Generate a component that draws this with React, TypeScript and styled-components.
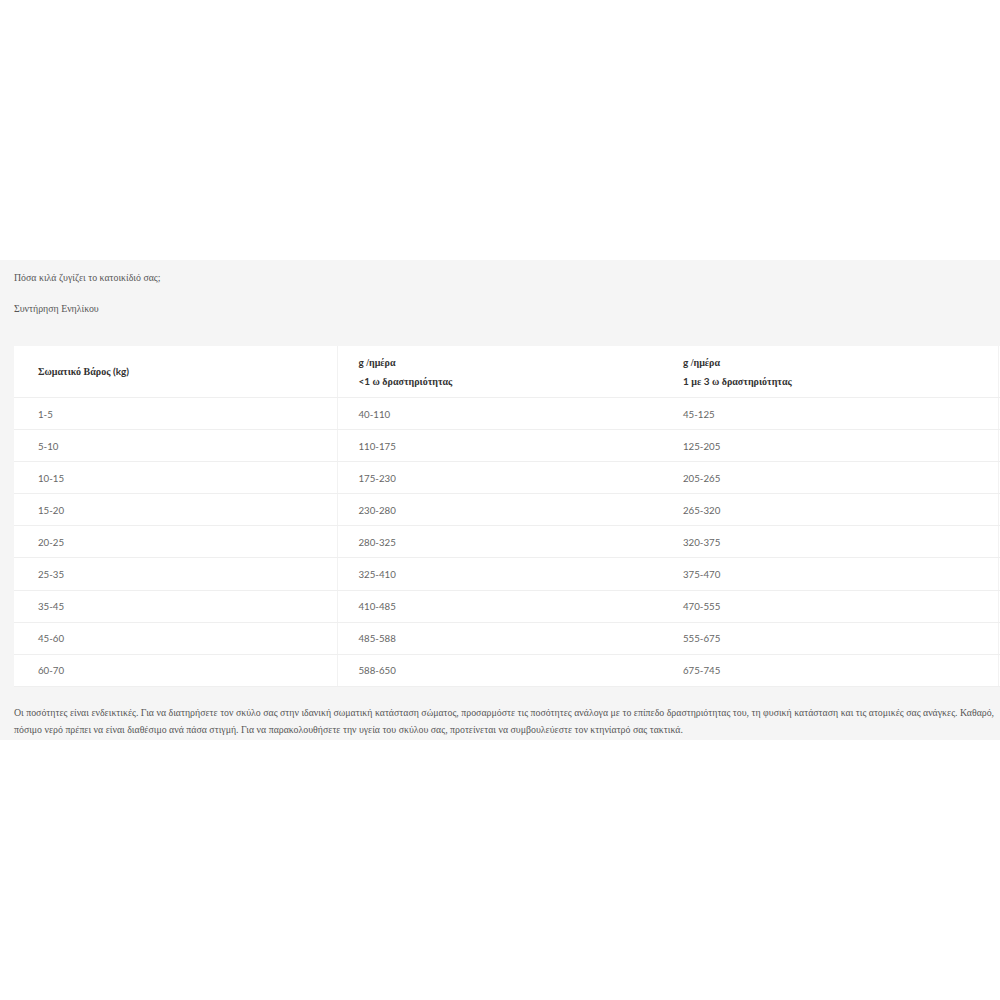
import React from "react";
import styled, { createGlobalStyle } from "styled-components";

const Global = createGlobalStyle`
  html, body { margin: 0; padding: 0; background: #fff; overflow-x: hidden; }
  body { font-family: "Liberation Serif", "Times New Roman", serif; }
`;

const Page = styled.div`
  width: 1000px;
  padding-top: 260px;
  padding-bottom: 260px;
`;

const Section = styled.section`
  width: 1040px;
  box-sizing: border-box;
  background: #f5f5f5;
  padding: 9px 0 2px 14px;
`;

const Text = styled.p<{ $gap?: number }>`
  margin: 0 0 ${(p) => p.$gap ?? 14}px 0;
  font-family: "Liberation Serif", "Times New Roman", serif;
  font-size: 9.85px;
  line-height: 17px;
  color: #555;
  width: 1000px;
`;

const Table = styled.table`
  width: 1026px;
  border-collapse: collapse;
  background: #fff;
  margin: 29px 0 17px 0;
  table-layout: fixed;
`;

const Head = styled.th<{ $first?: boolean }>`
  text-align: left;
  vertical-align: middle;
  padding: 0 21px 0 ${(p) => (p.$first ? 24 : 21)}px;
  height: 51px;
  font-family: "Liberation Serif", "Times New Roman", serif;
  font-weight: 700;
  font-size: 10px;
  line-height: 18px;
  color: #333;
  border-right: 1px solid #f2f2f2;
  border-bottom: 1px solid #efefef;
  &:nth-child(2) { border-right: none; }
`;

const Cell = styled.td<{ $first?: boolean }>`
  padding: 0 21px 0 ${(p) => (p.$first ? 24 : 21)}px;
  height: 31.1px;
  font-family: "Lato", "Open Sans", sans-serif;
  font-size: 9.7px;
  color: #666;
  border-right: 1px solid #f2f2f2;
  border-bottom: 1px solid #efefef;
  &:nth-child(2) { border-right: none; }
`;

const Sans = styled.span`
  font-family: "Lato", "Open Sans", sans-serif;
`;

const rows: [string, string, string][] = [
  ["1-5", "40-110", "45-125"],
  ["5-10", "110-175", "125-205"],
  ["10-15", "175-230", "205-265"],
  ["15-20", "230-280", "265-320"],
  ["20-25", "280-325", "320-375"],
  ["25-35", "325-410", "375-470"],
  ["35-45", "410-485", "470-555"],
  ["45-60", "485-588", "555-675"],
  ["60-70", "588-650", "675-745"],
];

export default function App() {
  return (
    <Page>
      <Global />
      <Section>
        <Text>Πόσα κιλά ζυγίζει το κατοικίδιό σας;</Text>
        <Text $gap={0}>Συντήρηση Ενηλίκου</Text>
        <Table>
          <colgroup>
            <col style={{ width: 323 }} />
            <col style={{ width: 325 }} />
            <col style={{ width: 336 }} />
            <col />
          </colgroup>
          <thead>
            <tr>
              <Head $first>
                Σωματικό Βάρος <Sans>(kg)</Sans>
              </Head>
              <Head>
                <Sans>g </Sans>/ημέρα
                <br />
                <Sans>&lt;1 </Sans>ω δραστηριότητας
              </Head>
              <Head>
                <Sans>g </Sans>/ημέρα
                <br />
                <Sans>1 </Sans>με <Sans>3 </Sans>ω δραστηριότητας
              </Head>
              <Head />
            </tr>
          </thead>
          <tbody>
            {rows.map((r) => (
              <tr key={r[0]}>
                <Cell $first>{r[0]}</Cell>
                <Cell>{r[1]}</Cell>
                <Cell>{r[2]}</Cell>
                <Cell />
              </tr>
            ))}
          </tbody>
        </Table>
        <Text $gap={0}>
          Οι ποσότητες είναι ενδεικτικές. Για να διατηρήσετε τον σκύλο σας στην ιδανική σωματική κατάσταση σώματος, προσαρμόστε τις ποσότητες ανάλογα με το επίπεδο δραστηριότητας του, τη φυσική κατάσταση και τις ατομικές σας ανάγκες. Καθαρό, πόσιμο νερό πρέπει να είναι διαθέσιμο ανά πάσα στιγμή. Για να παρακολουθήσετε την υγεία του σκύλου σας, προτείνεται να συμβουλεύεστε τον κτηνίατρό σας τακτικά.
        </Text>
      </Section>
    </Page>
  );
}
